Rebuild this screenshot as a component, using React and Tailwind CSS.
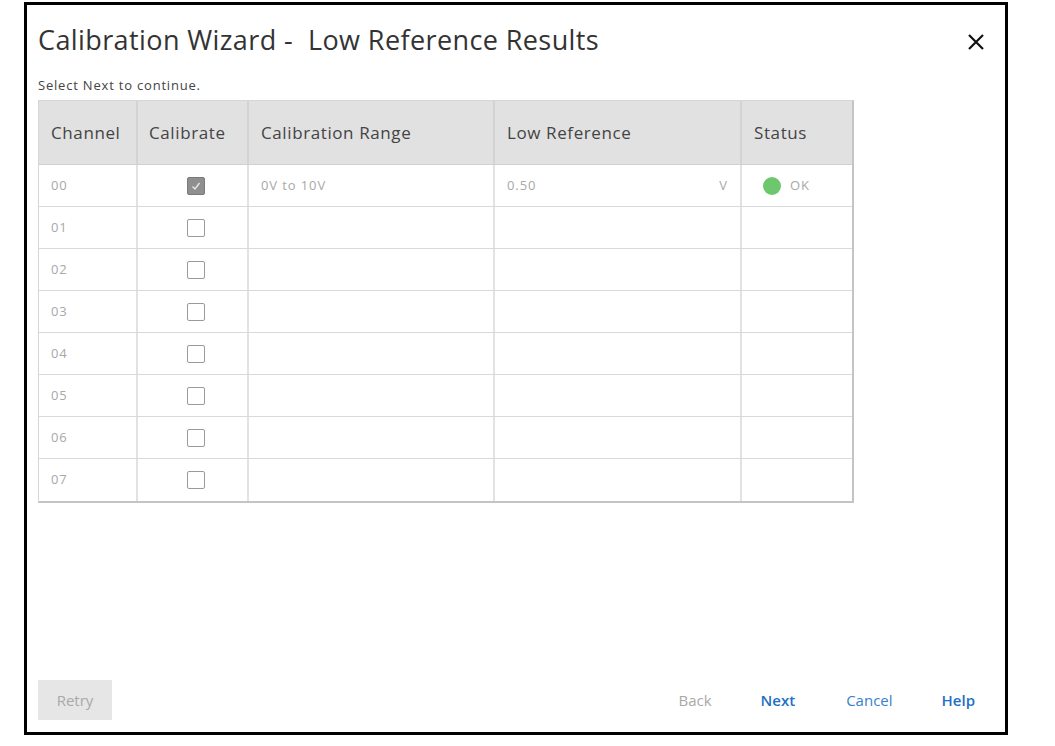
import React from "react";

const rows = ["00", "01", "02", "03", "04", "05", "06", "07"];

function Check({ checked }) {
  if (checked) {
    return (
      <div className="w-[18px] h-[18px] rounded-[2px] bg-[#8f8f8f] border border-[#7a7a7a] flex items-center justify-center">
        <svg width="12" height="12" viewBox="0 0 12 12">
          <path d="M2.5 6.5 L5 9 L9.5 3" fill="none" stroke="#e8e8e8" strokeWidth="1.4" />
        </svg>
      </div>
    );
  }
  return <div className="w-[18px] h-[18px] rounded-[2px] border-[1.5px] border-[#9a9a9a] bg-white" />;
}

export default function App() {
  return (
    <div className="w-[1055px] h-[746px] bg-white" style={{ fontFamily: '"Open Sans", "Noto Sans", sans-serif' }}>
      <div className="ml-[24px] pt-[2px]">
        <div className="w-[984px] h-[733px] border-[3px] border-black flex flex-col pl-[11px] pr-[20px]">
          <div className="flex items-start justify-between mt-[17px] h-[40px]">
            <div className="text-[27px] leading-[36px] text-[#333] tracking-[0.4px]">Calibration Wizard -&nbsp; Low Reference Results</div>
            <svg width="18" height="18" viewBox="0 0 18 18" className="mt-[11px]">
              <path d="M2 2 L16 16 M16 2 L2 16" stroke="#111" strokeWidth="2.2" />
            </svg>
          </div>
          <div className="text-[13px] leading-[16px] text-[#444] tracking-[0.8px] mt-[15px]">Select Next to continue.</div>
          <div className="mt-[7px] w-[816px] border border-[#d6d6d6] border-r-[2px] border-b-[2px] border-r-[#c4c4c4] border-b-[#c4c4c4]">
            <div className="flex h-[64px] bg-[#e1e1e1] text-[17px] tracking-[0.6px] text-[#444] border-b border-[#d0d0d0]">
              <div className="w-[99px] px-[12px] flex items-center border-r-[2px] border-[#d3d3d3]">Channel</div>
              <div className="w-[111px] px-[11px] flex items-center border-r-[2px] border-[#d3d3d3]">Calibrate</div>
              <div className="w-[246px] px-[12px] flex items-center border-r-[2px] border-[#d3d3d3]">Calibration Range</div>
              <div className="w-[247px] px-[12px] flex items-center border-r-[2px] border-[#d3d3d3]">Low Reference</div>
              <div className="flex-1 px-[12px] flex items-center">Status</div>
            </div>
            {rows.map((r, i) => (
              <div key={r} className={"flex h-[42px] text-[13px] tracking-[0.9px] text-[#a8a8a8] " + (i < rows.length - 1 ? "border-b border-[#d9d9d9]" : "")}>
                <div className="w-[99px] px-[12px] flex items-center border-r-[2px] border-[#e2e2e2]">{r}</div>
                <div className="w-[111px] pl-[6px] flex items-center justify-center border-r-[2px] border-[#e2e2e2]">
                  <Check checked={i === 0} />
                </div>
                <div className="w-[246px] px-[12px] flex items-center border-r-[2px] border-[#e2e2e2]">{i === 0 ? "0V to 10V" : ""}</div>
                <div className="w-[247px] px-[12px] flex items-center justify-between border-r-[2px] border-[#e2e2e2]">
                  {i === 0 ? (
                    <>
                      <span>0.50</span>
                      <span>V</span>
                    </>
                  ) : null}
                </div>
                <div className="flex-1 px-[21px] flex items-center gap-[9px]">
                  {i === 0 ? (
                    <>
                      <span className="w-[18px] h-[18px] rounded-full bg-[#6dc86d]" />
                      <span>OK</span>
                    </>
                  ) : null}
                </div>
              </div>
            ))}
          </div>
          <div className="flex-1" />
          <div className="flex items-center h-[40px] mb-[12px]">
            <div className="w-[74px] h-[40px] bg-[#e6e6e6] text-[#a9a9a9] text-[15px] flex items-center justify-center">Retry</div>
            <div className="flex-1" />
            <div className="text-[15px] text-[#a9a9a9] mr-[49px]">Back</div>
            <div className="text-[15px] text-[#1f6fc4] font-semibold mr-[51px]">Next</div>
            <div className="text-[15px] text-[#3a7fca] mr-[49px]">Cancel</div>
            <div className="text-[15px] text-[#1f6fc4] font-semibold mr-[10px]">Help</div>
          </div>
        </div>
      </div>
    </div>
  );
}
